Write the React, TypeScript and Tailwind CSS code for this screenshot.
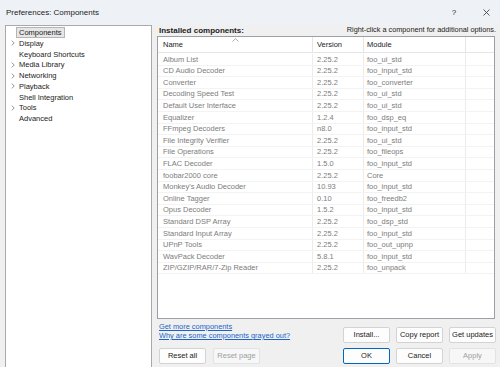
import React from "react";

const tree = [
  { label: "Components", arrow: false, selected: true },
  { label: "Display", arrow: true },
  { label: "Keyboard Shortcuts", arrow: false },
  { label: "Media Library", arrow: true },
  { label: "Networking", arrow: true },
  { label: "Playback", arrow: true },
  { label: "Shell Integration", arrow: false },
  { label: "Tools", arrow: true },
  { label: "Advanced", arrow: false },
];

const rows = [
  ["Album List", "2.25.2", "foo_ui_std"],
  ["CD Audio Decoder", "2.25.2", "foo_input_std"],
  ["Converter", "2.25.2", "foo_converter"],
  ["Decoding Speed Test", "2.25.2", "foo_ui_std"],
  ["Default User Interface", "2.25.2", "foo_ui_std"],
  ["Equalizer", "1.2.4", "foo_dsp_eq"],
  ["FFmpeg Decoders", "n8.0", "foo_input_std"],
  ["File Integrity Verifier", "2.25.2", "foo_ui_std"],
  ["File Operations", "2.25.2", "foo_fileops"],
  ["FLAC Decoder", "1.5.0", "foo_input_std"],
  ["foobar2000 core", "2.25.2", "Core"],
  ["Monkey's Audio Decoder", "10.93", "foo_input_std"],
  ["Online Tagger", "0.10", "foo_freedb2"],
  ["Opus Decoder", "1.5.2", "foo_input_std"],
  ["Standard DSP Array", "2.25.2", "foo_dsp_std"],
  ["Standard Input Array", "2.25.2", "foo_input_std"],
  ["UPnP Tools", "2.25.2", "foo_out_upnp"],
  ["WavPack Decoder", "5.8.1", "foo_input_std"],
  ["ZIP/GZIP/RAR/7-Zip Reader", "2.25.2", "foo_unpack"],
];

function Chevron() {
  return (
    <svg width="4" height="6" viewBox="0 0 4 6" className="block">
      <path d="M0.8 0.6 L3.2 3 L0.8 5.4" fill="none" stroke="#7a7a7a" strokeWidth="0.8" />
    </svg>
  );
}

function Btn({ label, disabled, primary }: { label: string; disabled?: boolean; primary?: boolean }) {
  return (
    <div
      className={
        "w-[47px] h-[16px] flex items-center justify-center rounded-[2px] text-[7.5px] " +
        (primary
          ? "border border-[#0067c0] bg-[#fdfdfd] text-[#1b1b1b]"
          : disabled
          ? "border border-[#e3e3e3] bg-[#f7f7f7] text-[#a0a0a0]"
          : "border border-[#d3d3d3] bg-[#fdfdfd] text-[#1b1b1b]")
      }
    >
      {label}
    </div>
  );
}

export default function App() {
  return (
    <div
      className="w-[500px] h-[367px] bg-[#f0f0f0] flex flex-col overflow-hidden text-[#1b1b1b]"
      style={{ fontFamily: '"Liberation Sans", Arial, sans-serif' }}
    >
      <div className="h-[25px] shrink-0 bg-[#eef2f6] flex items-center pl-[6px] text-[8px]">
        <span>Preferences: Components</span>
        <span className="ml-auto w-[10px] text-center text-[8px]">?</span>
        <span className="ml-[22px] mr-[9px] w-[10px] flex justify-center">
          <svg width="7" height="7" viewBox="0 0 7 7">
            <path d="M0.5 0.5 L6.5 6.5 M6.5 0.5 L0.5 6.5" stroke="#333" strokeWidth="0.8" />
          </svg>
        </span>
      </div>

      <div className="flex flex-1 pl-[5px]">
        <div className="w-[147px] h-[343px] bg-white border border-[#a9a9a9] pt-[1px] pl-[1px]">
          {tree.map((t) => (
            <div key={t.label} className="h-[10.8px] flex items-center text-[7.5px]">
              <div className="w-[9px] flex justify-end pr-[1px]">{t.arrow && <Chevron />}</div>
              <span
                className={
                  "px-[2px] leading-[9px] " +
                  (t.selected ? "bg-[#e6e6e6] border border-[#b5b5b5]" : "border border-transparent")
                }
              >
                {t.label}
              </span>
            </div>
          ))}
        </div>

        <div className="w-[340px] ml-[5px] flex flex-col">
          <div className="h-[11px] flex items-center justify-between pl-[2px] pr-[1px]">
            <span className="font-bold text-[8px]">Installed components:</span>
            <span className="text-[7.3px]">Right-click a component for additional options.</span>
          </div>

          <div className="w-[338px] h-[283px] bg-white border border-[#9aa0a6] flex flex-col">
            <div className="relative h-[16px] flex text-[7.5px] border-b border-[#e5e5e5]">
              <div className="w-[154px] pl-[5px] flex items-center pt-[1px]">Name</div>
              <div className="w-[51px] pl-[4px] flex items-center border-l border-[#e5e5e5] pt-[1px]">Version</div>
              <div className="w-[102px] pl-[3px] flex items-center border-l border-[#e5e5e5] pt-[1px]">Module</div>
              <div className="flex-1 border-l border-[#e5e5e5]" />
              <svg width="7" height="4" viewBox="0 0 7 4" className="absolute left-[74px] top-[1px]">
                <path d="M0.5 3.5 L3.5 0.6 L6.5 3.5" fill="none" stroke="#8a8a8a" strokeWidth="0.7" />
              </svg>
            </div>
            <div className="pt-[1px]">
              {rows.map((r) => (
                <div key={r[0]} className="h-[11.6px] flex text-[7.5px] text-[#7d7d7d] border-b border-[#f3f3f3]">
                  <div className="w-[154px] pl-[5px] flex items-center whitespace-nowrap">{r[0]}</div>
                  <div className="w-[51px] pl-[4px] flex items-center border-l border-[#ececec]">{r[1]}</div>
                  <div className="w-[102px] pl-[3px] flex items-center border-l border-[#ececec]">{r[2]}</div>
                  <div className="flex-1 border-l border-[#ececec]" />
                </div>
              ))}
            </div>
          </div>

          <div className="pl-[2px] mt-[3px] h-[20px] flex justify-between items-start">
            <div className="flex flex-col text-[7.4px] text-[#1a63c9] leading-[9px]">
              <span className="underline">Get more components</span>
              <span className="underline">Why are some components grayed out?</span>
            </div>
            <div className="flex gap-[6px] mt-[5px] mr-[1px]">
              <Btn label="Install..." />
              <Btn label="Copy report" />
              <Btn label="Get updates" />
            </div>
          </div>

          <div className="pl-[2px] mt-[6px] flex justify-between">
            <div className="flex gap-[7px]">
              <Btn label="Reset all" />
              <Btn label="Reset page" disabled />
            </div>
            <div className="flex gap-[6px] mr-[1px]">
              <Btn label="OK" primary />
              <Btn label="Cancel" />
              <Btn label="Apply" disabled />
            </div>
          </div>
        </div>
      </div>
    </div>
  );
}
